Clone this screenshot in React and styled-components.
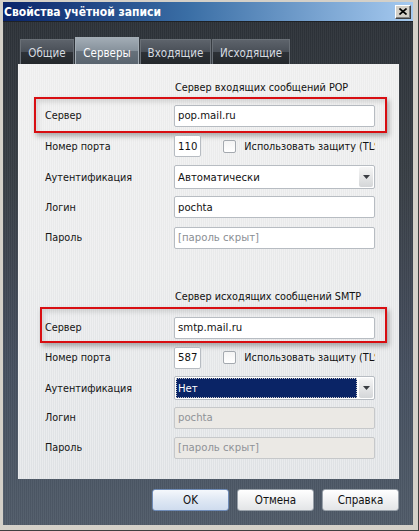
import React from 'react';
import styled, {createGlobalStyle, css} from 'styled-components';

const GlobalStyle = createGlobalStyle`
    html, body{
        margin:0;
        padding:0;
        background:#d4d0c8;
    }
    body{
        font-family:"DejaVu Sans Condensed", "DejaVu Sans", "Liberation Sans", sans-serif;
        font-size:10.75px;
        color:#111;
    }
`;

const incoming = [
    {label:'Сервер', value:'pop.mail.ru', highlight:{top:-7, bottom:-6, left:-11, right:-12}},
    {label:'Номер порта', port:'110'},
    {label:'Аутентификация', select:'Автоматически'},
    {label:'Логин', value:'pochta'},
    {label:'Пароль', value:'[пароль скрыт]', placeholder:true},
];

const outgoing = [
    {label:'Сервер', value:'smtp.mail.ru', highlight:{top:-9, bottom:-4, left:-5, right:-12}},
    {label:'Номер порта', port:'587'},
    {label:'Аутентификация', select:'Нет', selected:true},
    {label:'Логин', value:'pochta', disabled:true},
    {label:'Пароль', value:'[пароль скрыт]', disabled:true, placeholder:true},
];

const tabs = [
    {name:'Общие', w:54},
    {name:'Серверы', w:64, active:true},
    {name:'Входящие', w:71},
    {name:'Исходящие', w:78},
];

const FormRow = ({row}) => (
    <Row>
        {row.highlight && <Highlight $box={row.highlight}/>}
        <Label>{row.label}</Label>
        {row.port ? (
            <PortLine>
                <Field $w={29}>{row.port}</Field>
                <Check/>
                <CheckText>Использовать защиту (TLS/SSL)</CheckText>
            </PortLine>
        ) : row.select ? (
            <Select>
                <SelectValue $selected={row.selected}>{row.select}</SelectValue>
                <Arrow>
                    <svg width="7" height="4" viewBox="0 0 7 4"><path d="M0 0h7L3.5 4z" fill="#3a3d42"/></svg>
                </Arrow>
            </Select>
        ) : (
            <Field $disabled={row.disabled} $placeholder={row.placeholder}>{row.value}</Field>
        )}
    </Row>
);

const App = () => {
    return (
        <>
            <GlobalStyle/>
            <Window>
                <TitleBar>
                    <Title>Свойства учётной записи</Title>
                    <CloseButton>
                        <svg width="8" height="7" viewBox="0 0 8 7">
                            <path d="M0.5 0.5L7.5 6.5M7.5 0.5L0.5 6.5" stroke="#000" strokeWidth="1.6"/>
                        </svg>
                    </CloseButton>
                </TitleBar>
                <Body>
                    <TabBar>
                        {tabs.map(tab => <Tab key={tab.name} $active={tab.active} $w={tab.w}>{tab.name}</Tab>)}
                    </TabBar>
                    <Panel>
                        <Section $gap={7.5}>
                            <Heading $mb={1.5}>Сервер входящих сообщений POP</Heading>
                            {incoming.map(row => <FormRow key={row.label} row={row}/>)}
                        </Section>
                        <Section $gap={7} $mt={41}>
                            <Heading $mb={5}>Сервер исходящих сообщений SMTP</Heading>
                            {outgoing.map(row => <FormRow key={row.label} row={row}/>)}
                        </Section>
                    </Panel>
                    <Buttons>
                        <Button $default>OK</Button>
                        <Button>Отмена</Button>
                        <Button>Справка</Button>
                    </Buttons>
                </Body>
            </Window>
        </>
    )
}

const Window = styled.div`
    width:419px;
    height:531px;
    box-sizing:border-box;
    padding:2px 5px 5px 3px;
    display:flex;
    flex-direction:column;
    background:#d4d0c8;
    border-right:1px solid #404040;
    border-bottom:1px solid #404040;
`;

const TitleBar = styled.div`
    height:19px;
    flex:none;
    display:flex;
    align-items:center;
    justify-content:space-between;
    padding:0 2px 0 1px;
    background:linear-gradient(to right, #0a246a 0%, #3a6ea5 45%, #a6caf0 100%);
`;

const Title = styled.div`
    font-weight:bold;
    font-size:12px;
    color:#fff;
`;

const CloseButton = styled.div`
    width:16px;
    height:14px;
    box-sizing:border-box;
    display:flex;
    align-items:center;
    justify-content:center;
    background:#d4d0c8;
    border:1px solid;
    border-color:#fff #404040 #404040 #fff;
    box-shadow:inset -1px -1px 0 #808080;
`;

const Body = styled.div`
    flex:1;
    display:flex;
    flex-direction:column;
    padding:15px 14px 0 15px;
    border-top:1px solid #1e2226;
    background:
        repeating-linear-gradient(90deg, rgba(255,255,255,0.035) 0 1px, rgba(0,0,0,0.04) 1px 2px),
        linear-gradient(to bottom, #2e3339 0%, #383e45 30%, #465060 70%, #505b69 100%);
`;

const TabBar = styled.div`
    display:flex;
    align-items:flex-end;
    gap:1px;
    height:27px;
    padding-left:2px;
`;

const Tab = styled.div`
    width:${p => p.$w}px;
    height:25px;
    box-sizing:border-box;
    display:flex;
    align-items:center;
    justify-content:center;
    padding-top:2px;
    font-size:11.5px;
    color:#d6dbe0;
    border:1px solid #6a7077;
    border-bottom:none;
    background:linear-gradient(to bottom, #5d636b 0%, #4a5058 48%, #2d3136 52%, #24282c 100%);
    ${p => p.$active && css`
        height:27px;
        color:#fff;
        border-color:#a4adb5;
        padding-top:4px;
        background:linear-gradient(to bottom, #a2acb5 0%, #87929c 48%, #66717b 52%, #5a646e 100%);
    `}
`;

const Panel = styled.div`
    height:415px;
    box-sizing:border-box;
    padding:17px 0 0 27px;
    background:
        repeating-linear-gradient(90deg, rgba(255,255,255,0.35) 0 1px, transparent 1px 2px),
        linear-gradient(to bottom, #ededed 0%, #e8e9ea 50%, #dee1e4 100%);
`;

const Section = styled.div`
    display:flex;
    flex-direction:column;
    gap:${p => p.$gap}px;
    margin-top:${p => p.$mt || 0}px;
`;

const Heading = styled.div`
    height:14px;
    line-height:14px;
    padding-left:130px;
    margin-bottom:${p => p.$mb}px;
`;

const Row = styled.div`
    position:relative;
    display:grid;
    grid-template-columns:129px 201px;
    align-items:center;
    height:23px;
    width:330px;
`;

const Highlight = styled.div`
    position:absolute;
    top:${p => p.$box.top}px;
    bottom:${p => p.$box.bottom}px;
    left:${p => p.$box.left}px;
    right:${p => p.$box.right}px;
    border:2px solid #d80e12;
    box-shadow:2px 3px 5px rgba(0,0,0,0.3), inset 2px 3px 5px rgba(0,0,0,0.12);
    pointer-events:none;
`;

const Label = styled.div`
    color:#141414;
`;

const Field = styled.div`
    width:${p => p.$w ? p.$w + 'px' : 'auto'};
    height:22px;
    box-sizing:border-box;
    display:flex;
    align-items:center;
    padding:0 3px;
    background:#fff;
    border:1px solid #b7bcc2;
    border-radius:2px;
    font-size:11.25px;
    color:${p => p.$placeholder ? '#8a8e93' : '#111'};
    ${p => p.$disabled && css`
        background:#ebe9e5;
        border-color:#c6c8ca;
        color:#8f9297;
    `}
`;

const PortLine = styled.div`
    display:flex;
    align-items:center;
    overflow:hidden;
    white-space:nowrap;
`;

const Check = styled.div`
    width:13px;
    height:13px;
    flex:none;
    box-sizing:border-box;
    margin:0 8px 0 22px;
    border:1px solid #a4a9af;
    border-radius:2px;
    background:linear-gradient(to bottom, #f4f4f4, #fff);
`;

const CheckText = styled.span``;

const Select = styled.div`
    height:24px;
    box-sizing:border-box;
    display:flex;
    align-items:stretch;
    padding:1px;
    background:#fff;
    border:1px solid #b7bcc2;
    border-radius:2px;
`;

const SelectValue = styled.div`
    flex:1;
    display:flex;
    align-items:center;
    padding:0 2px;
    font-size:11.25px;
    ${p => p.$selected && css`
        background:#0a2466;
        color:#fff;
        outline:1px dotted #c8c8c8;
        outline-offset:-1px;
    `}
`;

const Arrow = styled.div`
    width:14px;
    margin-left:2px;
    display:flex;
    align-items:center;
    justify-content:center;
    border-radius:2px;
    background:linear-gradient(to bottom, #f6f6f6, #d4d6d8);
`;

const Buttons = styled.div`
    display:flex;
    justify-content:flex-end;
    gap:8px;
    margin-top:10px;
`;

const Button = styled.div`
    width:77px;
    height:22px;
    box-sizing:border-box;
    display:flex;
    align-items:center;
    justify-content:center;
    font-size:11.5px;
    color:#111;
    border:1px solid #99a1aa;
    border-radius:3px;
    background:linear-gradient(to bottom, #ffffff 0%, #f1f2f3 50%, #e3e5e7 100%);
    ${p => p.$default && css`
        border-color:#6f8cb8;
        background:linear-gradient(to bottom, #f5f8fc 0%, #dfe8f4 50%, #cfdcee 100%);
    `}
`;

export default App
